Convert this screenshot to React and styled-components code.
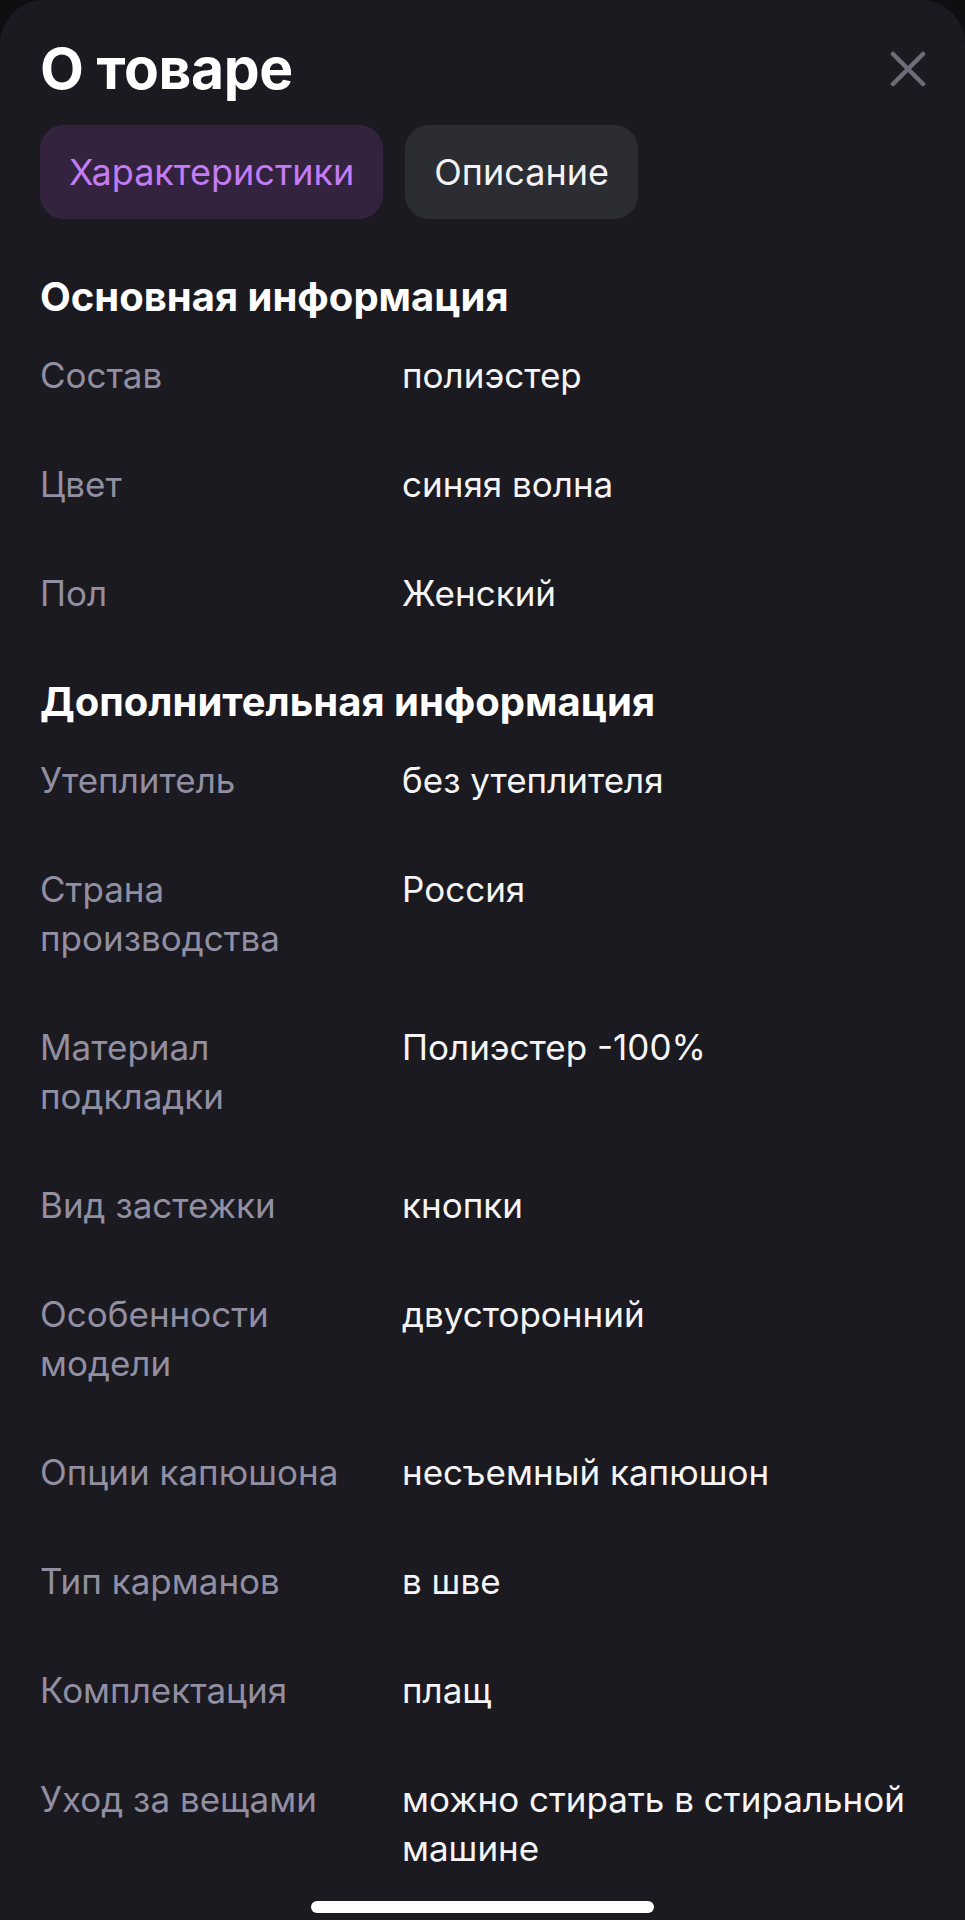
import React from 'react';
import styled, { createGlobalStyle } from 'styled-components';

const GlobalStyle = createGlobalStyle`
  * {
    box-sizing: border-box;
  }

  body {
    margin: 0;
    background: #0f0f12;
    font-family: Inter, "Noto Sans", "Liberation Sans", sans-serif;
    -webkit-font-smoothing: antialiased;
  }
`;

const Sheet = styled.div`
  position: relative;
  min-height: 1920px;
  padding: 40px 40px 60px;
  background: #1b1a20;
  border-radius: 44px 44px 0 0;
  overflow: hidden;
`;

const Header = styled.div`
  display: flex;
  align-items: center;
  justify-content: space-between;
  height: 58px;
`;

const Title = styled.h1`
  margin: 0;
  font-size: 57px;
  font-weight: 700;
  line-height: 58px;
  color: #ffffff;
  letter-spacing: -0.4px;
`;

const CloseButton = styled.button`
  display: flex;
  align-items: center;
  justify-content: center;
  width: 40px;
  height: 40px;
  margin-right: -3px;
  padding: 0;
  border: none;
  background: transparent;
  cursor: pointer;
`;

const Tabs = styled.div`
  display: flex;
  gap: 22px;
  margin-top: 27px;
`;

const Tab = styled.button`
  height: 94px;
  padding: 0 29px;
  border: none;
  border-radius: 24px;
  font-family: inherit;
  font-size: 36px;
  font-weight: 400;
  background: ${p => (p.$active ? '#33233f' : '#2c2c33')};
  color: ${p => (p.$active ? '#c37cf6' : '#f3f3f5')};
  cursor: pointer;
`;

const Section = styled.section`
  margin-top: ${p => p.$gap}px;
`;

const SectionTitle = styled.h2`
  margin: 0 0 32px;
  font-size: 40px;
  font-weight: 700;
  line-height: 44px;
  color: #ffffff;
`;

const List = styled.div`
  display: flex;
  flex-direction: column;
  gap: 60px;
`;

const Row = styled.div`
  display: grid;
  grid-template-columns: 340px 1fr;
  column-gap: 22px;
  font-size: 35px;
  line-height: 49px;
`;

const Label = styled.div`
  color: #918fa1;
`;

const Value = styled.div`
  color: #f5f5f7;
`;

const HomeIndicator = styled.div`
  position: absolute;
  left: 50%;
  bottom: 20px;
  width: 343px;
  height: 12px;
  margin-left: -172px;
  border-radius: 6px;
  background: #ffffff;
`;

const mainInfo = [
  ['Состав', 'полиэстер'],
  ['Цвет', 'синяя волна'],
  ['Пол', 'Женский'],
];

const extraInfo = [
  ['Утеплитель', 'без утеплителя'],
  ['Страна производства', 'Россия'],
  ['Материал подкладки', 'Полиэстер -100%'],
  ['Вид застежки', 'кнопки'],
  ['Особенности модели', 'двусторонний'],
  ['Опции капюшона', 'несъемный капюшон'],
  ['Тип карманов', 'в шве'],
  ['Комплектация', 'плащ'],
  ['Уход за вещами', 'можно стирать в стиральной машине'],
];

function CloseIcon() {
  return (
    <svg width="36" height="36" viewBox="0 0 36 36" fill="none">
      <path
        d="M3 3L33 33M33 3L3 33"
        stroke="#6d6c78"
        strokeWidth="4.5"
        strokeLinecap="round"
      />
    </svg>
  );
}

function InfoList({ items }) {
  return (
    <List>
      {items.map(([label, value]) => (
        <Row key={label}>
          <Label>{label}</Label>
          <Value>{value}</Value>
        </Row>
      ))}
    </List>
  );
}

export default function App() {
  return (
    <>
      <GlobalStyle />
      <Sheet>
        <Header>
          <Title>О товаре</Title>
          <CloseButton aria-label="Закрыть">
            <CloseIcon />
          </CloseButton>
        </Header>

        <Tabs>
          <Tab $active>Характеристики</Tab>
          <Tab>Описание</Tab>
        </Tabs>

        <Section $gap={56}>
          <SectionTitle>Основная информация</SectionTitle>
          <InfoList items={mainInfo} />
        </Section>

        <Section $gap={62}>
          <SectionTitle>Дополнительная информация</SectionTitle>
          <InfoList items={extraInfo} />
        </Section>

        <HomeIndicator />
      </Sheet>
    </>
  );
}
